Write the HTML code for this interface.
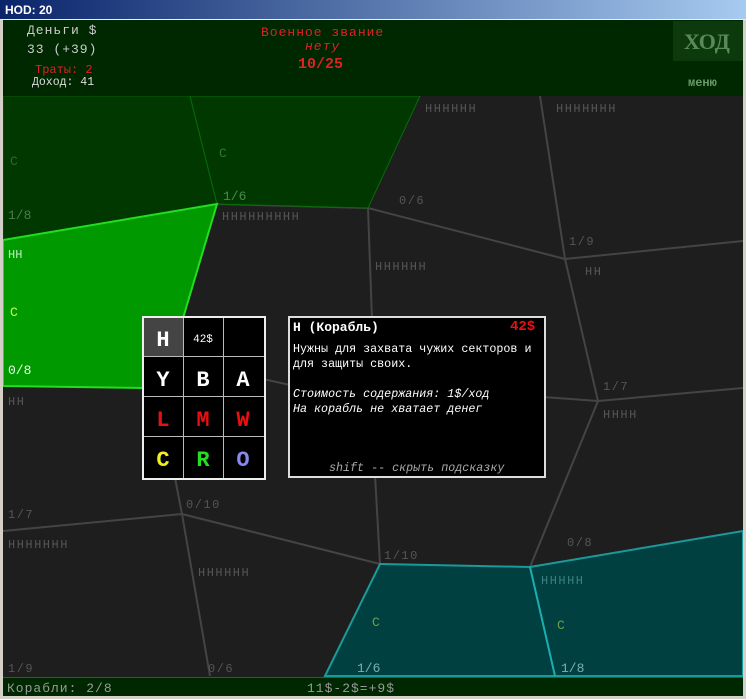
<!DOCTYPE html><html><head><meta charset="utf-8"><style>
body{margin:0;width:746px;height:699px;background:#d4d0c8;overflow:hidden;position:relative;font-family:"Liberation Mono","DejaVu Sans Mono",monospace}
.t{position:absolute;white-space:pre}
#title{position:absolute;left:0;top:0;width:746px;height:19px;background:linear-gradient(90deg,#0a246a,#a6caf0);color:#fff;font:bold 12px "Liberation Sans",sans-serif;border-bottom:1px solid #eee}
#hdr{position:absolute;left:3px;top:20px;width:740px;height:76px;background:#002800}
#bot{position:absolute;left:3px;top:677px;width:740px;height:18px;background:#002800;border-top:1px solid #226622}
</style></head><body>
<div id="title"><span class="t" style="left:5px;top:3px">HOD: 20</span></div>
<div id="hdr"></div>
<div class="t" style="left:27px;top:23px;color:#ccc;font-size:13px;letter-spacing:1px">Деньги $</div>
<div class="t" style="left:27px;top:42px;color:#ccc;font-size:13px;letter-spacing:1px">33 (+39)</div>
<div class="t" style="left:35px;top:63px;color:#d22;font-size:12px">Траты: 2</div>
<div class="t" style="left:32px;top:76px;color:#ddd;font-size:11.5px">Доход: 41</div>
<div class="t" style="left:261px;top:25px;color:#d22;font-size:13px;letter-spacing:1px">Военное звание</div>
<div class="t" style="left:305px;top:39px;color:#d22;font-size:13px;letter-spacing:1px;font-style:italic">нету</div>
<div class="t" style="left:298px;top:56px;color:#d22;font-size:15px;font-weight:bold">10/25</div>
<div style="position:absolute;left:673px;top:21px;width:70px;height:40px;background:#0d3a0d"></div>
<div class="t" style="left:684px;top:29px;color:#5a8a5a;font:bold 22px 'Liberation Serif',serif">ХОД</div>
<div class="t" style="left:688px;top:76px;color:#6a9a6a;font-size:12px;font-weight:bold">меню</div>
<svg style="position:absolute;left:3px;top:96px" width="740" height="581" viewBox="3 96 740 581">
<rect x="3" y="96" width="740" height="581" fill="#1e1e1e"/>
<g fill="none" stroke="#444" stroke-width="2">
<path d="M217,204 L368,208 L565,259 L540,96 M565,259 L743,241 M565,259 L598,401 L743,388 M598,401 L543,397 M598,401 L530,567 M368,208 L372,320 M375,475 L380,564 M182,514 L3,531 M182,514 L380,564 M182,514 L175,478 M182,514 L210,676 M263,379 L290,385"/>
</g>
<polygon points="3,96 190,96 217,204 3,240" fill="#003800" stroke="#0a5a0a" stroke-width="1"/>
<polygon points="190,96 420,96 368,208 217,204" fill="#003800" stroke="#0a6a0a" stroke-width="1"/>
<polygon points="3,240 217,204 167,372 143,388 3,386" fill="#009900" stroke="#22dd22" stroke-width="2"/>
<polygon points="325,676 380,564 530,567 743,531 743,676" fill="#004040" stroke="#1a9a9a" stroke-width="2"/>
<line x1="530" y1="567" x2="555" y2="676" stroke="#1ab0b0" stroke-width="2"/>
<g font-family="Liberation Mono,monospace" font-size="12" fill="#555" letter-spacing="1.5">
<text x="425" y="112">НННННН</text><text x="556" y="112">ННННННН</text>
<text x="222" y="220">ННННННННН</text><text x="399" y="204">0/6</text>
<text x="375" y="270">НННННН</text><text x="569" y="245">1/9</text><text x="585" y="275">НН</text>
<text x="603" y="390">1/7</text><text x="603" y="418">НННН</text>
<text x="8" y="405">НН</text><text x="8" y="518">1/7</text><text x="8" y="548">ННННННН</text>
<text x="186" y="508">0/10</text><text x="198" y="576">НННННН</text>
<text x="384" y="559">1/10</text><text x="567" y="546">0/8</text>
<text x="8" y="672">1/9</text><text x="208" y="672">0/6</text>
</g>
<g font-family="Liberation Mono,monospace" font-size="13">
<text x="10" y="165" fill="#2a6a2a">C</text><text x="219" y="157" fill="#2a7a2a">C</text>
<text x="8" y="219" fill="#4a7a4a">1/8</text><text x="223" y="200" fill="#4a8a4a">1/6</text>
<text x="8" y="258" fill="#bbeebb" font-size="12">НН</text>
<text x="10" y="316" fill="#ccff44">C</text>
<text x="8" y="374" fill="#eeffee">0/8</text>
<text x="372" y="626" fill="#6aa04a">C</text><text x="557" y="629" fill="#6aa04a">C</text>
<text x="541" y="584" fill="#3a8080" font-size="12" letter-spacing="1.5">ННННН</text>
<text x="357" y="672" fill="#7ab0b0">1/6</text><text x="561" y="672" fill="#7ab0b0">1/8</text>
</g>
</svg>
<div style="position:absolute;left:142px;top:316px;width:122px;height:162px;background:#000;border:1px solid #ddd"></div>
<svg style="position:absolute;left:142px;top:316px" width="124" height="164">
<rect x="1" y="1" width="40" height="39" fill="#444"/>
<g stroke="#bbb" stroke-width="1" fill="none"><path d="M1.5,40.5H122.5 M1.5,80.5H122.5 M1.5,120.5H122.5 M41.5,1V162 M81.5,1V162"/><rect x="1" y="1" width="122" height="162" stroke="#eee" stroke-width="2"/></g>
<g font-family="Liberation Mono,monospace" font-weight="bold" font-size="22" text-anchor="middle">
<text x="21" y="30" fill="#fff">H</text><text x="61" y="26" fill="#fff" font-size="11" font-weight="normal">42$</text>
<text x="21" y="70" fill="#fff">Y</text><text x="61" y="70" fill="#fff">B</text><text x="101" y="70" fill="#fff">A</text>
<text x="21" y="110" fill="#e81010">L</text><text x="61" y="110" fill="#e81010">M</text><text x="101" y="110" fill="#e81010">W</text>
<text x="21" y="150" fill="#f0f020">C</text><text x="61" y="150" fill="#20e020">R</text><text x="101" y="150" fill="#8888ee">O</text>
</g></svg>
<div style="position:absolute;left:288px;top:316px;width:254px;height:158px;background:#000;border:2px solid #ddd"></div>
<div class="t" style="left:293px;top:320px;color:#fff;font-size:13px;font-weight:bold">Н (Корабль)</div>
<div class="t" style="left:510px;top:319px;color:#e81010;font-size:14px;font-weight:bold">42$</div>
<div class="t" style="left:293px;top:342px;color:#fff;font-size:11.7px;line-height:15px">Нужны для захвата чужих секторов и
для защиты своих.

<i>Стоимость содержания: 1$/ход
На корабль не хватает денег</i></div>
<div class="t" style="left:329px;top:461px;color:#aaa;font-size:11.7px;font-style:italic">shift -- скрыть подсказку</div>
<div id="bot"></div>
<div class="t" style="left:7px;top:681px;color:#999;font-size:13px;letter-spacing:1px">Корабли: 2/8</div>
<div class="t" style="left:307px;top:681px;color:#999;font-size:13px;letter-spacing:1px">11$-2$=+9$</div>
</body></html>
